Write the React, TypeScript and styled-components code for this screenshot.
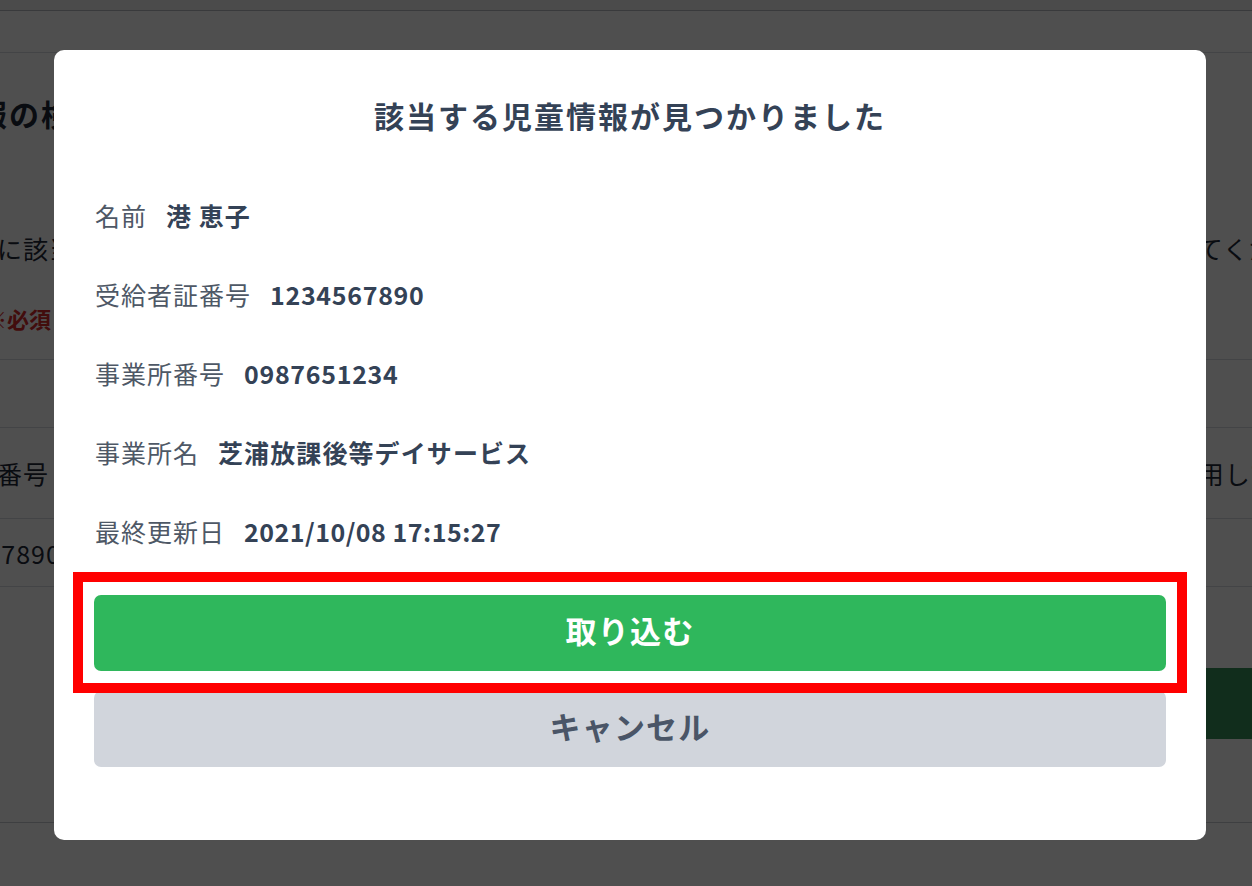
import * as React from "react";
import styled, { createGlobalStyle } from "styled-components";

const GlobalStyle = createGlobalStyle`
    html, body {
        margin: 0;
        padding: 0;
        overflow: hidden;
    }
    body {
        font-family: "Noto Sans CJK JP", "Noto Sans", sans-serif;
    }
`;

// ---- background page (dimmed behind the dialog) ----

const Page = styled.div`
    width: 100vw;
    height: 100vh;
    background: #ffffff;
    overflow: hidden;
`;

const TopBar = styled.div`
    height: 10px;
    background: #f0f1f3;
    border-bottom: 1px solid #b9bcc2;
`;

const Section = styled.section`
    margin-top: 41px;
    border-top: 1px solid #d9dce1;
`;

const SectionInner = styled.div`
    margin-left: -107px;
    width: 1434px;
    display: flex;
    flex-direction: column;
`;

const PageHeading = styled.h2`
    margin: 40px 0 0 -12px;
    font-size: 30px;
    line-height: 40px;
    font-weight: 700;
    letter-spacing: 2px;
    color: #1f2937;
`;

const SplitLine = styled.div<{ top: number }>`
    margin-top: ${props => props.top}px;
    display: flex;
    justify-content: space-between;
    font-size: 25px;
    line-height: 36px;
    letter-spacing: 1px;
    color: #1f2937;
`;

const Required = styled.div`
    margin-top: 36px;
    margin-left: 92px;
    font-size: 22px;
    line-height: 32px;
    font-weight: 700;
    color: #d52b2b;
`;

const Table = styled.div`
    margin-top: 25px;
    margin-left: -40px;
    width: 1500px;
    border-bottom: 1px solid #d9dce1;
`;

const TableRow = styled.div<{ h: number }>`
    height: ${props => props.h}px;
    border-top: 1px solid #d9dce1;
    display: flex;
    align-items: center;
    justify-content: space-between;
    padding: 0 25px 0 40px;
    font-size: 25px;
    letter-spacing: 1px;
    color: #1f2937;
    box-sizing: border-box;
`;

const RowCell = styled.span<{ indent?: number }>`
    margin-left: ${props => props.indent ?? 0}px;
`;

const ActionRow = styled.div`
    margin-top: 81px;
    display: flex;
    justify-content: flex-end;
`;

const PageButton = styled.div`
    width: 260px;
    height: 71px;
    margin-right: -60px;
    background: #37925a;
    border-radius: 6px;
`;

const Footer = styled.div`
    margin-top: 83px;
    border-top: 1px solid #c9ccd1;
`;

// ---- dialog ----

const Overlay = styled.div`
    position: fixed;
    inset: 0;
    background: rgba(0, 0, 0, 0.69);
    display: flex;
    align-items: flex-start;
    padding: 50px 0 0 54px;
    box-sizing: border-box;
`;

const Dialog = styled.div`
    position: relative;
    width: 1152px;
    height: 790px;
    background: #ffffff;
    border-radius: 10px;
    padding: 45px 40px 0;
    box-sizing: border-box;
    display: flex;
    flex-direction: column;
`;

const Title = styled.h1`
    margin: 0;
    text-align: center;
    font-size: 30px;
    line-height: 40px;
    font-weight: 700;
    letter-spacing: 2px;
    color: #344256;
`;

const InfoList = styled.dl`
    margin: 40px 0 0;
    display: flex;
    flex-direction: column;
`;

const InfoRow = styled.div`
    height: 79px;
    display: flex;
    align-items: center;
    gap: 19px;
    padding-left: 1px;
`;

const Label = styled.dt`
    font-size: 25px;
    letter-spacing: 1px;
    color: #4e5866;
`;

const Value = styled.dd<{ spacing: number }>`
    margin: 0;
    font-size: 25px;
    font-weight: 700;
    color: #344256;
    letter-spacing: ${props => props.spacing}px;
`;

const Buttons = styled.div`
    margin-top: 25px;
    display: flex;
    flex-direction: column;
    gap: 20px;
`;

const Button = styled.button<{ variant: "primary" | "secondary" }>`
    height: 76px;
    padding: 0 0 8px;
    border: none;
    border-radius: 7px;
    font-family: inherit;
    font-size: 31px;
    font-weight: 700;
    letter-spacing: 1.2px;
    cursor: pointer;
    background: ${props => (props.variant === "primary" ? "#2fb75c" : "#d1d5dc")};
    color: ${props => (props.variant === "primary" ? "#ffffff" : "#4a5567")};
`;

const Highlight = styled.div`
    position: absolute;
    left: 19px;
    right: 19px;
    top: 522px;
    height: 121px;
    border: 10px solid #ff0000;
    box-sizing: border-box;
    pointer-events: none;
`;

const rows: { label: string; value: string; spacing: number }[] = [
    { label: "名前", value: "港 恵子", spacing: 1 },
    { label: "受給者証番号", value: "1234567890", spacing: 0.7 },
    { label: "事業所番号", value: "0987651234", spacing: 0.7 },
    { label: "事業所名", value: "芝浦放課後等デイサービス", spacing: 1.1 },
    { label: "最終更新日", value: "2021/10/08 17:15:27", spacing: 0.5 },
];

const App = () => {
    return (
        <>
            <GlobalStyle />
            <Page>
                <TopBar />
                <Section>
                    <SectionInner>
                        <PageHeading>児童情報の検索</PageHeading>
                        <SplitLine top={97}>
                            <span>検索条件に該当する児童</span>
                            <span>を入力してください</span>
                        </SplitLine>
                        <Required>※必須</Required>
                        <Table>
                            <TableRow h={68} />
                            <TableRow h={91}>
                                <RowCell>受給者証番号</RowCell>
                                <RowCell>利用している</RowCell>
                            </TableRow>
                            <TableRow h={68}>
                                <RowCell indent={19}>1234567890</RowCell>
                                <RowCell />
                            </TableRow>
                        </Table>
                        <ActionRow>
                            <PageButton />
                        </ActionRow>
                        <Footer />
                    </SectionInner>
                </Section>
            </Page>
            <Overlay>
                <Dialog>
                    <Title>該当する児童情報が見つかりました</Title>
                    <InfoList>
                        {rows.map(r => (
                            <InfoRow key={r.label}>
                                <Label>{r.label}</Label>
                                <Value spacing={r.spacing}>{r.value}</Value>
                            </InfoRow>
                        ))}
                    </InfoList>
                    <Buttons>
                        <Button variant="primary">取り込む</Button>
                        <Button variant="secondary">キャンセル</Button>
                    </Buttons>
                    <Highlight />
                </Dialog>
            </Overlay>
        </>
    );
};

export default App;
